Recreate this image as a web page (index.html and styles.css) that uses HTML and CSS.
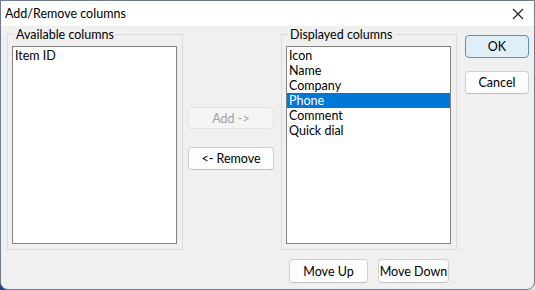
FILE: index.html
```html
<!DOCTYPE html>
<html lang="en">
<head>
  <meta charset="UTF-8">
  <title>Add/Remove columns</title>
  <link rel="stylesheet" href="styles.css">
</head>
<body>

  <div class="window">
    <div class="titlebar">
      <span class="title">Add/Remove columns</span>
      <svg class="close" width="12" height="12" viewBox="0 0 12 12">
        <path d="M1 1 L11 11 M11 1 L1 11" stroke="#1a1a1a" stroke-width="1.1" fill="none"/>
      </svg>
    </div>

    <div class="content">
      <fieldset class="group">
        <legend>Available columns</legend>
        <ul class="listbox">
          <li>Item ID</li>
        </ul>
      </fieldset>

      <div class="transfer">
        <button class="btn add" disabled>Add -&gt;</button>
        <button class="btn remove">&lt;- Remove</button>
      </div>

      <div class="displayed">
        <fieldset class="group">
          <legend>Displayed columns</legend>
          <ul class="listbox">
            <li>Icon</li>
            <li>Name</li>
            <li>Company</li>
            <li class="selected">Phone</li>
            <li>Comment</li>
            <li>Quick dial</li>
          </ul>
        </fieldset>
        <div class="move">
          <button class="btn move-up">Move Up</button>
          <button class="btn move-down">Move Down</button>
        </div>
      </div>

      <div class="actions">
        <button class="btn default">OK</button>
        <button class="btn cancel">Cancel</button>
      </div>
    </div>
  </div>

</body>
</html>
```

FILE: styles.css
```css
html, body {
  margin: 0;
  padding: 0;
}

body {
  width: 535px;
  height: 290px;
  background: linear-gradient(to right, #1d3f8f 50%, #e3e8ee 50%);
  font-family: Lato, "Noto Sans", sans-serif;
  font-size: 12.5px;
  color: #000;
}

.window {
  box-sizing: border-box;
  width: 535px;
  height: 290px;
  border: 1px solid #6d7c8e;
  border-radius: 0 0 8px 8px;
  background-color: #f0f0f0;
  overflow: hidden;
}

.titlebar {
  height: 25px;
  background-color: #fff;
  display: flex;
  align-items: center;
  justify-content: space-between;
  padding: 0 10px 0 4px;
}

.title {
  line-height: 15px;
}

.close {
  display: block;
}

.content {
  display: flex;
  align-items: flex-start;
  padding: 1px 0 0 6px;
}

.group {
  margin: 0;
  padding: 0;
  width: 176px;
  box-sizing: border-box;
  border: 1px solid #dcdcdc;
  min-inline-size: 0;
}

.group legend {
  padding: 0 2px;
  margin-left: 6px;
  line-height: 15px;
}

.listbox {
  list-style: none;
  box-sizing: border-box;
  width: 165px;
  height: 198px;
  margin: 4px 0 5px 4px;
  padding: 1px 0 0;
  background-color: #fff;
  border: 1px solid #828282;
}

.listbox li {
  line-height: 15px;
  height: 15px;
  padding-left: 2px;
  white-space: nowrap;
}

.listbox li.selected {
  background-color: #0078d7;
  color: #fff;
}

.btn {
  box-sizing: border-box;
  font-family: inherit;
  font-size: 12.5px;
  color: #000;
  background-color: #fdfdfd;
  border: 1px solid #d0d0d0;
  border-bottom-color: #c0c0c0;
  border-radius: 4px;
  padding: 0;
  line-height: 15px;
}

.transfer {
  display: flex;
  flex-direction: column;
  gap: 18px;
  margin: 80px 7px 0 5px;
}

.transfer .btn {
  width: 86px;
  height: 23px;
}

.btn.add {
  height: 22px;
  background-color: #f5f5f5;
  border-color: #e5e5e5;
  color: #a0a0a0;
}

.move {
  display: flex;
  gap: 10px;
  margin: 9px 0 0 8px;
}

.move .btn {
  height: 24px;
}

.move-up {
  width: 79px;
}

.move-down {
  width: 71px;
}

.actions {
  display: flex;
  flex-direction: column;
  gap: 13px;
  margin: 8px 0 0 8px;
}

.actions .btn {
  width: 64px;
  height: 23px;
}

.btn.default {
  background-color: #e0eef9;
  border: 1px solid #4b93d1;
}
```
